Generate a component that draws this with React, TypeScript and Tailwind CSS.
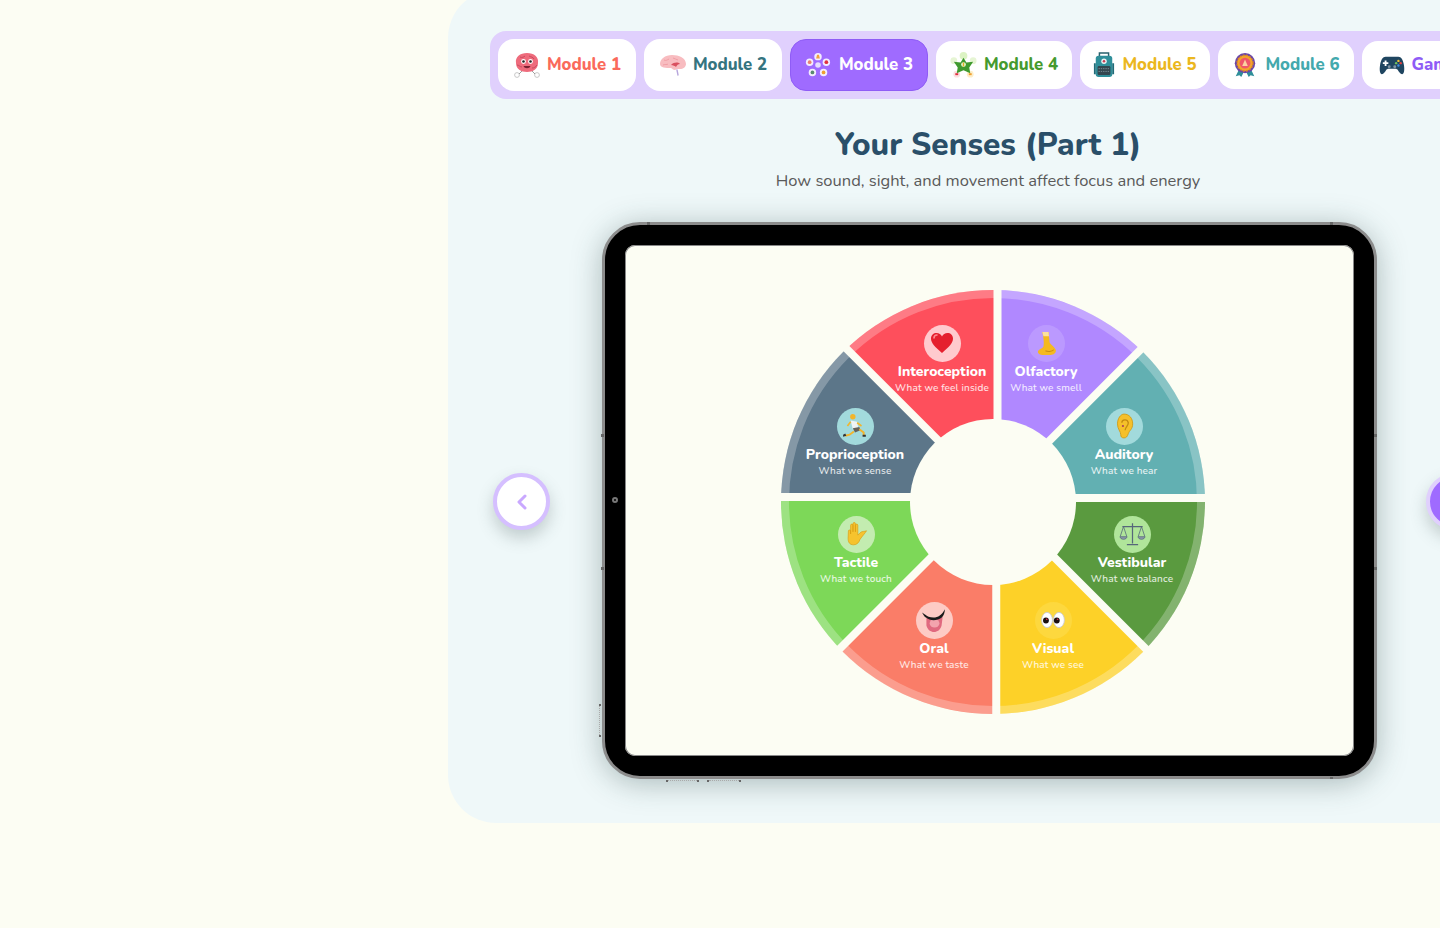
import React from 'react';
import { ChevronLeft } from 'lucide-react';

const MascotIcon = () => (
  <svg viewBox="0 0 28 28" className="w-[28px] h-[28px]">
    <path d="M3 12C2 6 7 2 14 2s12 4 11 10c0 6-5 9-11 9S3 18 3 12z" fill="#ee6b7c" />
    <path d="M7 6c2 1 4 0 5-1M16 5c2 1 4 1 5 3M4 14c2 0 3 2 5 2M19 17c2 0 4-1 5-3" stroke="#c84a5e" strokeWidth="1" fill="none" />
    <circle cx="10.500" cy="10.500" r="2.400" fill="#fff" />
    <circle cx="17.500" cy="10.500" r="2.400" fill="#fff" />
    <circle cx="10.500" cy="10.500" r="1.300" fill="#222" />
    <circle cx="17.500" cy="10.500" r="1.300" fill="#222" />
    <path d="M10.500 15c1 3 6 3 7 0z" fill="#7a2030" />
    <circle cx="4" cy="24" r="2.400" fill="#fff" stroke="#bbb" strokeWidth="0.800" />
    <circle cx="24" cy="24" r="2.400" fill="#fff" stroke="#bbb" strokeWidth="0.800" />
    <path d="M9 20l-3 3M19 20l3 3" stroke="#888" strokeWidth="0.800" />
  </svg>
);

const BrainIcon = () => (
  <svg viewBox="0 0 28 28" className="w-[28px] h-[28px]">
    <path d="M1 13c0-5 5-9 12-9s14 3 14 9c0 3-3 5-6 5l-3 0-2 1c-2 0-2-1-4-2-5 0-11 0-11-4z" fill="#f8bcc0" />
    <path d="M5 9c2 1 3 0 5-1M14 7c2 1 3 1 5 2M4 14c2-1 4 0 5-1" stroke="#ee9aa0" strokeWidth="0.900" fill="none" />
    <path d="M12 14c3-3 7-3 9-1-2 0-3 1-4 3-1-1-3-2-5-2z" fill="#d9505f" />
    <path d="M18 19l1 5" stroke="#b7a6dc" strokeWidth="1.400" strokeLinecap="round" />
  </svg>
);

const FlowerIcon = () => (
  <svg viewBox="0 0 28 28" className="w-[26px] h-[26px]">
    <circle cx="14" cy="14" r="3" fill="#e6dcff" />
    <circle cx="14" cy="5" r="4" fill="#f3ecff" />
    <path d="M13 3h2l1 4h-4z" fill="#f0a040" />
    <circle cx="5" cy="11" r="4" fill="#f3ecff" />
    <circle cx="5" cy="11" r="2" fill="#e88070" />
    <circle cx="23" cy="11" r="4" fill="#f3ecff" />
    <circle cx="23" cy="11" r="2" fill="#e03040" />
    <circle cx="8" cy="22" r="4" fill="#f3ecff" />
    <circle cx="8" cy="22" r="2" fill="#5a8a70" />
    <circle cx="20" cy="22" r="4" fill="#f3ecff" />
    <circle cx="20" cy="22" r="2" fill="#f0a030" />
  </svg>
);

const StarIcon = () => (
  <svg viewBox="0 0 28 28" className="w-[27px] h-[27px]">
    <circle cx="14" cy="4" r="4" fill="#dcf3c4" />
    <circle cx="4" cy="9" r="3.500" fill="#e6f5d4" />
    <circle cx="24" cy="9" r="3.500" fill="#e6f5d4" />
    <circle cx="7" cy="23" r="3.500" fill="#fbe0e0" />
    <circle cx="21" cy="23" r="3.500" fill="#fdeec8" />
    <path d="M14 6l3 5 7-1-4 6 1 6-7-3-7 3 1-6-4-6 7 1z" fill="#3f9a2e" />
    <circle cx="14" cy="13" r="2.500" fill="#e4f5d0" />
    <path d="M14 11v4" stroke="#e0b020" strokeWidth="1.400" />
    <path d="M5.500 23h3" stroke="#e03040" strokeWidth="2" />
    <path d="M19.500 23h3" stroke="#f0a030" strokeWidth="2" />
  </svg>
);

const BackpackIcon = () => (
  <svg viewBox="0 0 24 28" className="w-[22px] h-[26px]">
    <path d="M7 5V1h10v4" stroke="#27606c" strokeWidth="1.600" fill="none" />
    <rect x="3" y="4" width="18" height="23" rx="3" fill="#2f8f9a" />
    <path d="M1 12h2v12H1zM21 12h2v12h-2z" fill="#1f6b78" />
    <circle cx="12" cy="10" r="3" fill="#e8f2f2" />
    <circle cx="12" cy="10" r="1.400" fill="#c83a50" />
    <rect x="5" y="15" width="14" height="10" rx="1.500" fill="#33464f" />
    <path d="M6 18h12M6 21h12" stroke="#7a8f98" strokeWidth="1" strokeDasharray="1.500 1" />
  </svg>
);

const MedalIcon = () => (
  <svg viewBox="0 0 28 28" className="w-[26px] h-[26px]">
    <path d="M7 20l-3 6 4-1 2 2 3-6zM21 20l3 6-4-1-2 2-3-6z" fill="#2f8f9a" />
    <circle cx="14" cy="12" r="11" fill="#6a45a8" />
    <circle cx="14" cy="12" r="8.500" fill="#f3a52c" stroke="#e08a20" strokeDasharray="2 1.400" strokeWidth="1.600" />
    <circle cx="14" cy="12" r="5.800" fill="#f0566a" />
    <path d="M11 15l3-7 3 7z" fill="#fbd2a0" />
  </svg>
);

const GamepadIcon = () => (
  <svg viewBox="0 0 28 24" className="w-[26px] h-[22px]">
    <path d="M7 3h14c3 0 5 3 6 9 1 6 0 10-2 10s-3-2-5-5c-1-1-2-1-3-1h-6c-1 0-2 0-3 1-2 3-3 5-5 5s-3-4-2-10C2 6 4 3 7 3z" fill="#1f4560" />
    <path d="M7 7v6M4 10h6" stroke="#fff" strokeWidth="2" />
    <circle cx="21" cy="7.500" r="1.300" fill="#f0c030" />
    <circle cx="23.500" cy="10" r="1.300" fill="#e04040" />
    <circle cx="18.500" cy="10" r="1.300" fill="#70c060" />
    <circle cx="21" cy="12.500" r="1.300" fill="#4090e0" />
    <circle cx="11" cy="14" r="1.600" fill="#7f93a3" />
    <circle cx="17" cy="14" r="1.600" fill="#7f93a3" />
  </svg>
);

const HeartIcon = () => (
  <svg viewBox="0 0 24 24" className="w-[24px] h-[24px]">
    <path d="M12 22C5 16 1 12 1 7.500 1 4 3.600 2 6.500 2 9 2 11 3.400 12 5.500 13 3.400 15 2 17.500 2 20.400 2 23 4 23 7.500 23 12 19 16 12 22z" fill="#e5202e" />
    <path d="M4 7c0-2 1.500-3 3-3" stroke="#ff8a90" strokeWidth="1.600" fill="none" strokeLinecap="round" />
  </svg>
);

const RunnerIcon = () => (
  <svg viewBox="0 0 24 24" className="w-[26px] h-[26px]">
    <circle cx="10" cy="3.500" r="2.500" fill="#f2b52c" />
    <path d="M8 7l6 1 1 6-5 1z" fill="#f1f4f4" />
    <path d="M10 14l6-1 1 3-5 2z" fill="#66625a" />
    <path d="M16 15l4 3 0 3" stroke="#f2b52c" strokeWidth="1.800" fill="none" />
    <path d="M11 17l-4 3-4 1" stroke="#f2b52c" strokeWidth="1.800" fill="none" />
    <path d="M14 9l4 3M8 8l-3 4" stroke="#f2b52c" strokeWidth="1.500" />
    <path d="M19 20h3v2h-3zM1 20l2-1 1 2-3 1z" fill="#333" />
  </svg>
);

const NoseIcon = () => (
  <svg viewBox="0 0 24 24" className="w-[25px] h-[25px]">
    <path d="M8 1h6l1 10c2 3 6 5 6 8 0 2-2 4-5 4H8c-3 0-5-2-4-4 1-2 4-2 5-4 1-3 0-9-1-14z" fill="#f5b921" />
    <path d="M8 1h6l.4 4H9z" fill="#fbe0a0" />
    <path d="M11 19c2 1 6 1 8-1" stroke="#c98d10" strokeWidth="1" fill="none" />
  </svg>
);

const EarIcon = () => (
  <svg viewBox="0 0 24 24" className="w-[26px] h-[26px]">
    <path d="M12 1c5 0 8 4 8 9 0 5-3 6-4 9-1 3-2 4-4 4s-3-1-3-3c0-3-3-5-3-10s3-9 6-9z" fill="#f5c02a" stroke="#d09a14" strokeWidth="0.800" />
    <path d="M10 9c0-3 5-4 6 0 0 3-3 4-3 7" stroke="#c48c10" strokeWidth="1.200" fill="none" />
    <circle cx="11" cy="12" r="1" fill="#a83a60" />
  </svg>
);

const HandIcon = () => (
  <svg viewBox="0 0 24 24" className="w-[26px] h-[26px]">
    <path d="M5 9c0-1 2-1 2 0v3V4c0-1.500 2.200-1.500 2.200 0v6V2.500c0-1.500 2.300-1.500 2.300 0V10V4c0-1.500 2.200-1.500 2.200 0v9l2-2c2-2 4-1 6-2-1 2-4 5-6 8-1 3-3 5-6 5-4 0-5-3-5-6z" fill="#f6c32e" stroke="#d89c14" strokeWidth="0.600" />
  </svg>
);

const TongueIcon = () => (
  <svg viewBox="0 0 24 24" className="w-[26px] h-[26px]">
    <path d="M5 9c2 3 13 3 15 0l-1 8c-1 4-4 6-7 6s-6-2-7-6z" fill="#e0697f" />
    <ellipse cx="12.500" cy="15" rx="4.500" ry="4" fill="#f3a3ad" />
    <path d="M1 5c3 2 4 3 6 4 3 1 8 1 10-1 2-1 4-4 5-6 0 3-1 6-3 8-4 3-11 3-14 0-2-1-3-3-4-5z" fill="#1a1a1a" />
  </svg>
);

const EyesIcon = () => (
  <svg viewBox="0 0 24 24" className="w-[26px] h-[26px]">
    <ellipse cx="6.500" cy="12" rx="5" ry="7" fill="#fff" stroke="#c8cad6" strokeWidth="0.800" />
    <ellipse cx="17.500" cy="12" rx="5" ry="7" fill="#fff" stroke="#c8cad6" strokeWidth="0.800" />
    <circle cx="5.500" cy="12.500" r="2.700" fill="#1b1010" />
    <circle cx="15.500" cy="12.500" r="2.700" fill="#1b1010" />
    <circle cx="6.200" cy="11.300" r="0.800" fill="#d83040" />
    <circle cx="16.200" cy="11.300" r="0.800" fill="#d83040" />
  </svg>
);

const ScalesIcon = () => (
  <svg viewBox="0 0 24 24" className="w-[27px] h-[27px]" fill="none" stroke="#56677a" strokeWidth="0.700">
    <path d="M12 2v18M7 21h10M3 5h18" strokeWidth="1.100" />
    <path d="M4 5L1 14M4 5l3 9M20 5l-3 9M20 5l3 9" />
    <path d="M1 14c0 3 6 3 6 0zM17 14c0 3 6 3 6 0z" fill="#8d9bab" />
  </svg>
);

const modules = [
  { label: 'Module 1', icon: <MascotIcon />, color: 'text-[#fa6a5b]', size: 'w-[138px] h-[52px] gap-[6px]' },
  { label: 'Module 2', icon: <BrainIcon />, color: 'text-[#35747f]', size: 'w-[138px] h-[52px] gap-[6px]' },
  { label: 'Module 3', icon: <FlowerIcon />, color: 'text-white', size: 'w-[138px] h-[52px] gap-[8px]', active: true },
  { label: 'Module 4', icon: <StarIcon />, color: 'text-[#459a2e]', size: 'w-[136px] h-[48px] gap-[7px]' },
  { label: 'Module 5', icon: <BackpackIcon />, color: 'text-[#ebb71f]', size: 'w-[130px] h-[48px] gap-[7px]' },
  { label: 'Module 6', icon: <MedalIcon />, color: 'text-[#44a9ad]', size: 'w-[136px] h-[48px] gap-[7px]' },
  { label: 'Game', icon: <GamepadIcon />, color: 'text-[#8f5cf6]', size: 'w-[112px] h-[48px] gap-[7px]' },
];

const sectors = [
  { fill: '#b088ff', points: '995,497 997.5,200 1290.2,200' },
  { fill: '#62b0b2', points: '995,497 1290.2,200 1300,200 1300,497.9' },
  { fill: '#5a9a3f', points: '995,497 1300,497.9 1300,803' },
  { fill: '#fdd128', points: '995,497 1300,803 1300,800 996.25,800' },
  { fill: '#fa7d68', points: '995,497 996.25,800 688.5,800' },
  { fill: '#7dd858', points: '995,497 688.5,800 690,800 690,497.1' },
  { fill: '#5c7689', points: '995,497 690,497.1 690,200 697.8,200' },
  { fill: '#fe4f5c', points: '995,497 697.8,200 997.5,200' },
];

const senses = [
  { title: 'Interoception', sub: 'What we feel inside', icon: <HeartIcon />, pos: 'left-[101px] top-[35px]', disc: 'bg-white/70' },
  { title: 'Olfactory', sub: 'What we smell', icon: <NoseIcon />, pos: 'left-[205px] top-[35px]', disc: 'bg-white/15' },
  { title: 'Proprioception', sub: 'What we sense', icon: <RunnerIcon />, pos: 'left-[14px] top-[118px]', disc: 'bg-[#a2dadc]' },
  { title: 'Auditory', sub: 'What we hear', icon: <EarIcon />, pos: 'left-[283px] top-[118px]', disc: 'bg-[#a2dadc]' },
  { title: 'Tactile', sub: 'What we touch', icon: <HandIcon />, pos: 'left-[15px] top-[226px]', disc: 'bg-[#c3ecb0]' },
  { title: 'Vestibular', sub: 'What we balance', icon: <ScalesIcon />, pos: 'left-[291px] top-[226px]', disc: 'bg-[#b0e59a]' },
  { title: 'Oral', sub: 'What we taste', icon: <TongueIcon />, pos: 'left-[93px] top-[312px]', disc: 'bg-[#fdcbc5]' },
  { title: 'Visual', sub: 'What we see', icon: <EyesIcon />, pos: 'left-[212px] top-[312px]', disc: 'bg-[#fdd83e]' },
];

// small hardware marks round the edge of the tablet frame
const ticks = [
  'left-[-4px] top-[209px] w-[3px] h-[3px]',
  'left-[-4px] top-[342px] w-[3px] h-[3px]',
  'left-[769px] top-[209px] w-[3px] h-[3px]',
  'left-[769px] top-[342px] w-[3px] h-[3px]',
  'left-[42px] top-[-3px] w-[3px] h-[3px]',
  'left-[725px] top-[-3px] w-[3px] h-[3px]',
  'left-[725px] top-[552px] w-[3px] h-[2px]',
  'left-[61px] top-[555px] w-[2px] h-[2px]',
  'left-[92px] top-[555px] w-[2px] h-[2px]',
  'left-[102px] top-[555px] w-[2px] h-[2px]',
  'left-[134px] top-[555px] w-[2px] h-[2px]',
  'left-[-6px] top-[479px] w-[2px] h-[2px]',
  'left-[-6px] top-[510px] w-[2px] h-[2px]',
];

const dotted = [
  'left-[63px] top-[555px] w-[29px] border-t',
  'left-[104px] top-[555px] w-[30px] border-t',
  'left-[-6px] top-[481px] h-[29px] border-l',
];

function Wheel() {
  return (
    <div className="relative w-[424px] h-[424px] ml-[7px] mt-[2px]">
      <svg viewBox="781 290 424 424" className="w-[424px] h-[424px]">
        <defs>
          <clipPath id="wheel-disc">
            <circle cx="993" cy="502" r="212" />
          </clipPath>
        </defs>
        <g clipPath="url(#wheel-disc)">
          {sectors.map((s) => (
            <polygon key={s.fill} points={s.points} fill={s.fill} />
          ))}
        </g>
        <circle cx="993" cy="502" r="208" fill="none" stroke="#ffffff" strokeOpacity="0.25" strokeWidth="8" />
        <circle cx="993" cy="502" r="83" fill="#fcfdf3" />
        <g stroke="#fcfdf3" strokeWidth="8">
          <line x1="997.5" y1="280" x2="997.5" y2="430" />
          <line x1="996.25" y1="570" x2="996.25" y2="724" />
          <line x1="770" y1="497.1" x2="920" y2="497.1" />
          <line x1="1070" y1="497.9" x2="1216" y2="497.9" />
          <line x1="1040.2" y1="450" x2="1190.2" y2="300" />
          <line x1="1050" y1="553" x2="1200" y2="703" />
          <line x1="938.5" y1="550" x2="788.5" y2="700" />
          <line x1="947.8" y1="450" x2="797.8" y2="300" />
        </g>
      </svg>
      {senses.map((s) => (
        <div key={s.title} className={`absolute w-[120px] flex flex-col items-center text-white ${s.pos}`}>
          <div className={`w-[37px] h-[37px] rounded-full flex items-center justify-center ${s.disc}`}>{s.icon}</div>
          <div className="text-[14px] leading-[19px] font-extrabold">{s.title}</div>
          <div className="text-[10px] leading-[14px] font-medium tracking-[0.15px] text-white/85 whitespace-nowrap">{s.sub}</div>
        </div>
      ))}
    </div>
  );
}

export default function App() {
  return (
    <div className="w-[1440px] h-[928px] overflow-hidden bg-[#fcfdf3] font-['Nunito','Lato','Noto_Sans',sans-serif]">
      <div className="-mt-[10px] ml-[448px] w-[1080px] h-[833px] rounded-l-[48px] bg-[#eff8f9] px-[42px] pt-[41px]">
        <div className="w-[996px] h-[68px] rounded-l-[16px] bg-[#e0d0fd] flex items-center gap-[8px] pl-[8px]">
          {modules.map((m) => (
            <div
              key={m.label}
              className={`shrink-0 flex items-center justify-center rounded-[16px] ${m.size} ${m.active ? 'bg-[#9f6bff] border border-[#8f5cf6]' : 'bg-white'}`}
            >
              {m.icon}
              <span className={`text-[16.8px] font-extrabold ${m.color}`}>{m.label}</span>
            </div>
          ))}
        </div>

        <h1 className="mt-[24px] text-center text-[31.6px] leading-[44px] font-extrabold text-[#2a4f69]">Your Senses (Part 1)</h1>
        <p className="mt-[2px] text-center text-[16.5px] leading-[24px] text-[#5a5a5a]">How sound, sight, and movement affect focus and energy</p>

        <div className="mt-[29px] px-[3px] flex items-center justify-between">
          <button className="mt-[2px] w-[57px] h-[57px] rounded-full bg-white border-4 border-[#d5bfff] flex items-center justify-center shadow-[0_8px_16px_rgba(60,80,80,0.25)]">
            <ChevronLeft size={24} strokeWidth={3} className="text-[#c9a8ff]" />
          </button>

          <div className="relative ml-[3px] w-[775px] h-[557px] rounded-[38px] border-[3px] border-[#8c8c8c] bg-black p-[20px] flex shadow-[0_4px_30px_rgba(40,70,70,0.35)]">
            {ticks.map((t) => (
              <span key={t} className={`absolute bg-[#666] ${t}`} />
            ))}
            {dotted.map((d) => (
              <span key={d} className={`absolute border-dotted border-[#aaa] ${d}`} />
            ))}
            <span className="absolute left-[7px] top-[272px] w-[6px] h-[6px] rounded-full border-[2px] border-[#777] bg-black" />
            <div className="flex-1 rounded-[10px] bg-[#fcfdf3] flex items-center justify-center ring-1 ring-inset ring-[#888]">
              <Wheel />
            </div>
          </div>

          <button className="mt-[2px] w-[57px] h-[57px] rounded-full bg-[#9f6bff] border-4 border-[#e0d0fd] shadow-[0_8px_16px_rgba(60,80,80,0.25)]" />
        </div>
      </div>
    </div>
  );
}
